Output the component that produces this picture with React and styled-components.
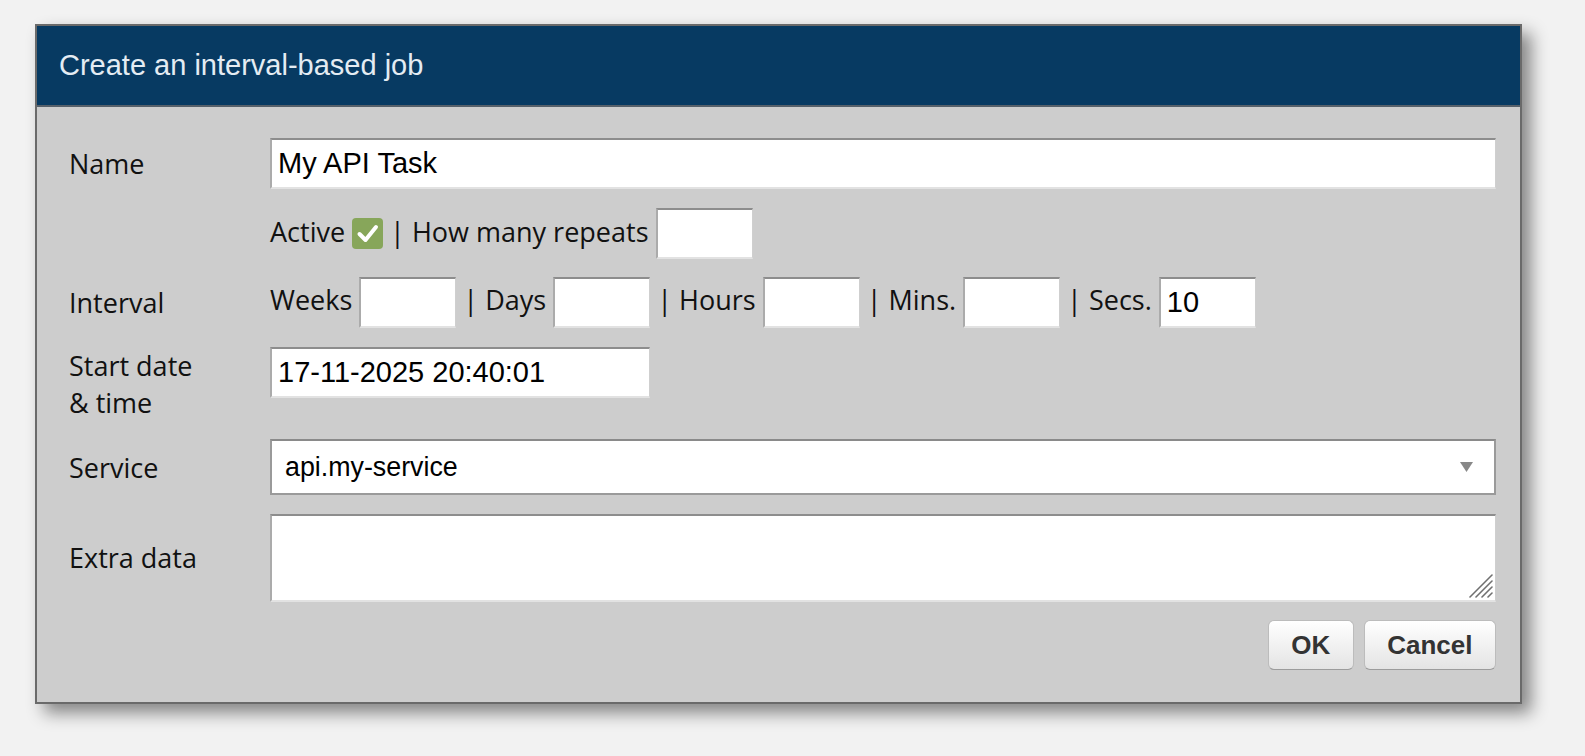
import React from "react";
import styled, { createGlobalStyle } from "styled-components";

const Global = createGlobalStyle`
  body {
    margin: 0;
    background: #f2f2f2;
  }
`;

const Page = styled.div`
  padding: 24px 0 40px 35px;
  font-family: "Open Sans", "Noto Sans", sans-serif;
`;

const Dialog = styled.div`
  width: 1487px;
  box-sizing: border-box;
  border: 2px solid #6a6a6a;
  background: #cdcdcd;
  box-shadow: 9px 9px 16px rgba(0, 0, 0, 0.45);
`;

const Header = styled.div`
  height: 79px;
  display: flex;
  align-items: center;
  padding: 0 22px;
  background: #073a62;
  border-bottom: 2px solid #56606a;
  color: #e4ecf3;
  font: 29px "Liberation Sans", Arial, sans-serif;
`;

const Form = styled.div`
  display: grid;
  grid-template-columns: 201px 1fr;
  row-gap: 18.5px;
  align-items: center;
  padding: 31px 24px 32px 32px;
`;

const Label = styled.div`
  font-size: 27px;
  line-height: 37px;
  color: #111;
  align-self: ${props => (props.$top ? "start" : "center")};
`;

const Field = styled.div`
  display: flex;
  align-items: center;
  align-self: ${props => (props.$top ? "start" : "center")};
  gap: 7px;
  min-width: 0;
  font-size: 27px;
  line-height: 37px;
  color: #111;
  white-space: nowrap;
`;

const Text = styled.span`
  padding-bottom: ${props => props.$lift || 4}px;
`;

const TextInput = styled.input`
  box-sizing: border-box;
  width: ${props => props.$width || "100%"};
  height: 51px;
  margin: 0;
  padding: 0 6px;
  border-style: solid;
  border-width: 2px 1px 2px 2px;
  border-color: #8d8d8d #cfcfcf #e2e2e2 #ababab;
  background: #fff;
  color: #000;
  font: 29px "Liberation Sans", Arial, sans-serif;
  outline: none;
`;

const Check = styled.span`
  width: 31px;
  height: 31px;
  border-radius: 4px;
  background: #87a65a;
  display: inline-flex;
  align-items: center;
  justify-content: center;
  flex: none;
`;

const SelectBox = styled.div`
  box-sizing: border-box;
  height: 56px;
  display: flex;
  align-items: center;
  justify-content: space-between;
  padding: 0 21px 0 13px;
  border: 2px solid #9a9a9a;
  border-top-color: #8a8a8a;
  background: #fff;
  color: #000;
  font: 26.8px "Liberation Sans", Arial, sans-serif;
`;

const AreaWrap = styled.div`
  position: relative;
`;

const TextArea = styled.textarea`
  display: block;
  box-sizing: border-box;
  width: 100%;
  height: 88px;
  margin: 0;
  padding: 5px;
  border-style: solid;
  border-width: 2px 1px 2px 2px;
  border-color: #8d8d8d #cfcfcf #e2e2e2 #ababab;
  background: #fff;
  font: 29px "Liberation Sans", Arial, sans-serif;
  outline: none;
  resize: none;
`;

const Grip = styled.svg`
  position: absolute;
  right: 3px;
  bottom: 4px;
  pointer-events: none;
`;

const Actions = styled.div`
  grid-column: 1 / -1;
  display: flex;
  justify-content: flex-end;
  gap: 10px;
`;

const Button = styled.button`
  height: 50px;
  padding: 0 22.5px;
  border: 1px solid #bcbcbc;
  border-bottom-color: #9c9c9c;
  border-radius: 6px;
  background: linear-gradient(#ffffff, #e4e4e4);
  color: #333;
  font: bold 26px "Liberation Sans", Arial, sans-serif;
  cursor: pointer;
`;

const CheckMark = () => (
  <svg width="31" height="31" viewBox="0 0 31 31">
    <polyline
      points="7.5,16 13.5,22 24,9"
      fill="none"
      stroke="#fff"
      strokeWidth="4"
      strokeLinecap="round"
      strokeLinejoin="round"
    />
  </svg>
);

const Arrow = () => (
  <svg width="13" height="10" viewBox="0 0 13 10">
    <polygon points="0,0 13,0 6.5,10" fill="#888" />
  </svg>
);

const ResizeGrip = () => (
  <Grip width="24" height="24" viewBox="0 0 24 24">
    <g stroke="#707070" strokeWidth="1.6" strokeLinecap="round">
      <line x1="1" y1="23" x2="23" y2="1" />
      <line x1="7" y1="23" x2="23" y2="7" />
      <line x1="13" y1="23" x2="23" y2="13" />
      <line x1="19" y1="23" x2="23" y2="19" />
    </g>
  </Grip>
);

const intervalUnits = [
  { label: "Weeks", value: "" },
  { label: "| Days", value: "" },
  { label: "| Hours", value: "" },
  { label: "| Mins.", value: "" },
  { label: "| Secs.", value: "10" }
];

const App = () => (
  <Page>
    <Global />
    <Dialog>
      <Header>Create an interval-based job</Header>
      <Form>
        <Label>Name</Label>
        <TextInput defaultValue="My API Task" />

        <span />
        <Field>
          <Text>Active</Text>
          <Check>
            <CheckMark />
          </Check>
          <Text>| How many repeats</Text>
          <TextInput $width="97px" defaultValue="" />
        </Field>

        <Label>Interval</Label>
        <Field>
          {intervalUnits.map(unit =>
            <React.Fragment key={unit.label}>
              <Text $lift={6}>{unit.label}</Text>
              <TextInput $width="97px" defaultValue={unit.value} />
            </React.Fragment>
          )}
        </Field>

        <Label $top>
          Start date
          <br />
          &amp; time
        </Label>
        <Field $top>
          <TextInput $width="380px" defaultValue="17-11-2025 20:40:01" />
        </Field>

        <Label>Service</Label>
        <SelectBox>
          api.my-service
          <Arrow />
        </SelectBox>

        <Label>Extra data</Label>
        <AreaWrap>
          <TextArea defaultValue="" />
          <ResizeGrip />
        </AreaWrap>

        <Actions>
          <Button>OK</Button>
          <Button>Cancel</Button>
        </Actions>
      </Form>
    </Dialog>
  </Page>
);

export default App;
